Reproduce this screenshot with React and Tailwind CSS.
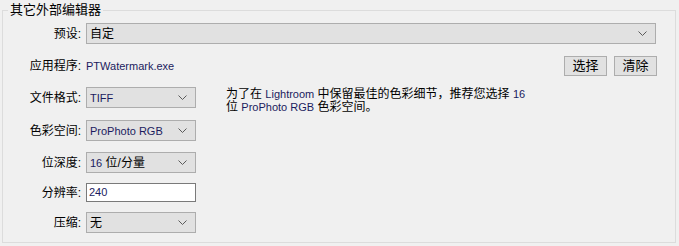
import React from 'react';

const cjk = { fontFamily: '"Liberation Sans", "Noto Sans CJK SC", sans-serif' };

const Latin = ({ children }) => (
  <span className="text-[11px] text-[#1b1b5e]">{children}</span>
);

const Chevron = () => (
  <svg width="9" height="5" viewBox="0 0 9 5" className="shrink-0">
    <polyline points="0.5,0.5 4.5,4.5 8.5,0.5" fill="none" stroke="#5a5a5a" strokeWidth="1" />
  </svg>
);

const Select = ({ children, className = '' }) => (
  <div className={`h-[21px] border border-[#adadad] bg-[#e1e1e1] flex items-center pl-[3px] pr-[8px] ${className}`}>
    <div className="flex-1 leading-[14px]">{children}</div>
    <Chevron />
  </div>
);

const Label = ({ children }) => (
  <div className="w-[79px] text-right pr-[1px] shrink-0 mr-[4px]">{children}</div>
);

const Button = ({ children }) => (
  <button className="w-[43px] h-[20px] border border-[#adadad] bg-[#e1e1e1] text-[13px] leading-[16px]">
    {children}
  </button>
);

export default function App() {
  return (
    <div className="w-[679px] h-[246px] bg-[#f0f0f0] pt-[2px] pl-[2px] text-[12px] text-black" style={cjk}>
      <fieldset className="w-[674px] h-[241px] border border-[#dcdcdc] px-0">
        <legend className="ml-[5px] px-[2px] text-[13px] leading-[16px]">其它外部编辑器</legend>

        <div className="flex items-center mt-[5px]">
          <Label>预设:</Label>
          <Select className="w-[570px]">自定</Select>
        </div>

        <div className="flex items-center mt-[12px] h-[20px]">
          <Label>应用程序:</Label>
          <Latin>PTWatermark.exe</Latin>
          <div className="flex-1" />
          <div className="flex gap-[7px] mr-[18px]">
            <Button>选择</Button>
            <Button>清除</Button>
          </div>
        </div>

        <div className="flex mt-[11px]">
          <div className="flex flex-col">
            <div className="flex items-center">
              <Label>文件格式:</Label>
              <Select className="w-[110px]"><Latin>TIFF</Latin></Select>
            </div>
            <div className="flex items-center mt-[12px]">
              <Label>色彩空间:</Label>
              <Select className="w-[110px]"><Latin>ProPhoto RGB</Latin></Select>
            </div>
            <div className="flex items-center mt-[11px]">
              <Label>位深度:</Label>
              <Select className="w-[110px]"><Latin>16</Latin> 位/分量</Select>
            </div>
            <div className="flex items-center mt-[10px]">
              <Label>分辨率:</Label>
              <div className="w-[110px] h-[19px] border border-[#7a7a7a] bg-white flex items-center pl-[2px]">
                <Latin>240</Latin>
              </div>
            </div>
            <div className="flex items-center mt-[10px]">
              <Label>压缩:</Label>
              <Select className="w-[110px]">无</Select>
            </div>
          </div>
          <div className="ml-[30px] mt-[1px] leading-[13px]">
            为了在 <Latin>Lightroom</Latin> 中保留最佳的色彩细节，推荐您选择 <Latin>16</Latin>
            <br />
            位 <Latin>ProPhoto RGB</Latin> 色彩空间。
          </div>
        </div>
      </fieldset>
    </div>
  );
}
